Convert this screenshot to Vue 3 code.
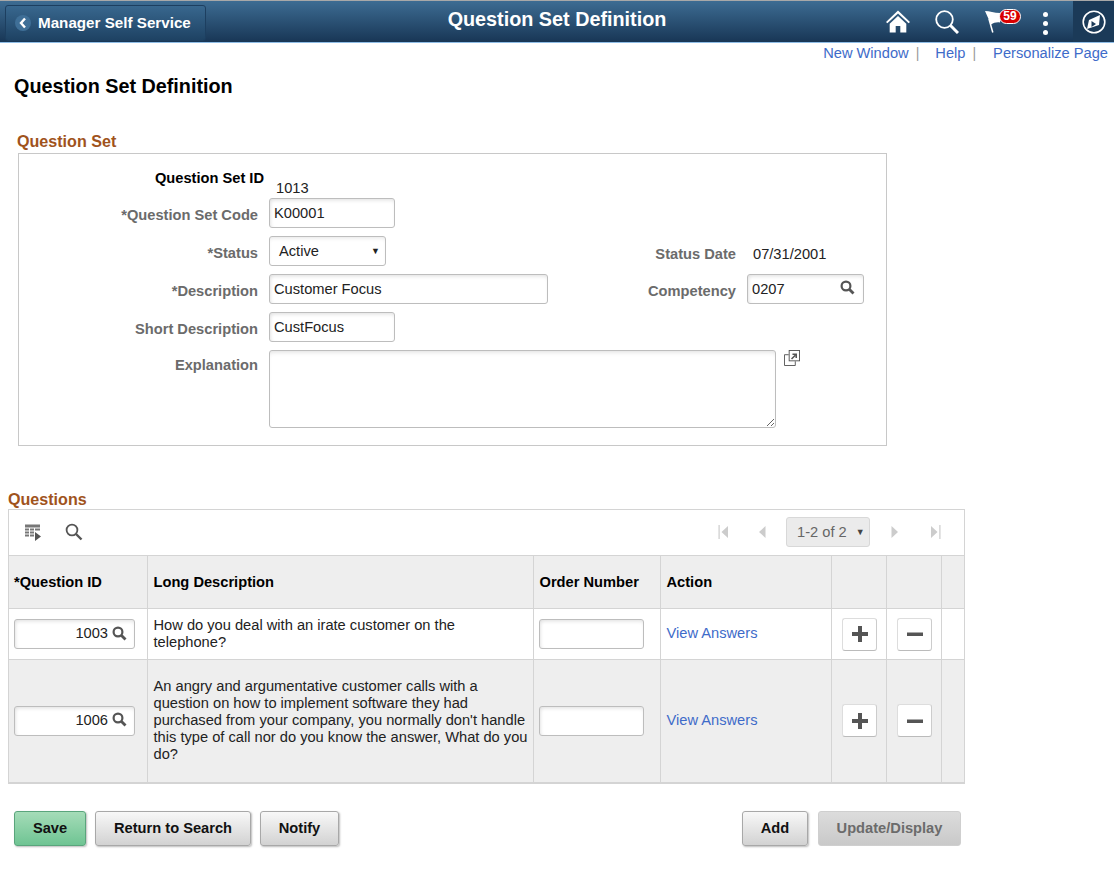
<template>
  <div class="page">
    <!-- 顶部横条 -->
    <header class="banner">
      <a href="javascript:;" class="back-btn">
        <span class="back-dot">
          <svg width="10" height="12" viewBox="0 0 10 12"><path d="M7 1.500 3 6l4 4.500" fill="none" stroke="#fff" stroke-width="2.400" /></svg>
        </span>
        <span class="back-text">Manager Self Service</span>
      </a>
      <div class="banner-title">Question Set Definition</div>
      <div class="banner-icons">
        <svg class="ic-home" width="24" height="23" viewBox="0 0 26 24">
          <path d="M13 0 0 12.500l1.500 1.500L13 3.200 24.500 14l1.500-1.500z" fill="#fff" />
          <path d="M4 14.500 13 6l9 8.500V24h-6.500v-7h-5v7H4z" fill="#fff" />
        </svg>
        <svg class="ic-search" width="24" height="24" viewBox="0 0 24 24">
          <circle cx="9.500" cy="9.500" r="8.300" fill="none" stroke="#fff" stroke-width="1.800" />
          <path d="M15.500 15.500 23 23" stroke="#fff" stroke-width="3" />
        </svg>
        <div class="flag">
          <svg width="18" height="22" viewBox="0 0 18 22">
            <path d="M0 0C5 0 10 2.500 17 2L15 11.500C11 11 9 12 6 13.500z" fill="#fff" />
            <path d="M4 8 7.800 21.500" stroke="#fff" stroke-width="1.500" />
          </svg>
          <span class="flag-count">59</span>
        </div>
        <div class="dots"><i></i><i></i><i></i></div>
        <div class="nav-bar-btn">
          <svg width="26" height="26" viewBox="0 0 26 26">
            <circle cx="13" cy="13" r="10.800" fill="none" stroke="#fff" stroke-width="1.600" />
            <path d="M19 6 18 16 6 20 8 11z" fill="#fff" />
            <path d="M10.500 12v6l4.500-3z" fill="#1b3a58" />
          </svg>
        </div>
      </div>
    </header>

    <nav class="page-links">
      <a href="javascript:;">New Window</a><span class="sep">|</span>
      <a href="javascript:;">Help</a><span class="sep">|</span>
      <a href="javascript:;" class="last">Personalize Page</a>
    </nav>

    <h1 class="page-title">Question Set Definition</h1>

    <!-- Question Set 表单 -->
    <h2 class="section-title set-title">Question Set</h2>
    <section class="set-box">
      <div class="id-row">
        <span class="id-label">Question Set ID</span>
        <span class="id-value">1013</span>
      </div>
      <div class="form-row">
        <label>*Question Set Code</label>
        <div class="input w-short">K00001</div>
      </div>
      <div class="form-row">
        <label>*Status</label>
        <div class="input select-box">Active<span class="caret">▼</span></div>
        <div class="side date-side">
          <label>Status Date</label>
          <span class="date">07/31/2001</span>
        </div>
      </div>
      <div class="form-row">
        <label>*Description</label>
        <div class="input w-long">Customer Focus</div>
        <div class="side">
          <label class="comp-label">Competency</label>
          <div class="input w-comp">
            0207
            <svg class="lens" width="15" height="15" viewBox="0 0 15 15"><circle cx="6" cy="6" r="4.400" fill="none" stroke="#555" stroke-width="2.200" /><path d="m9.500 9.500 4 4" stroke="#555" stroke-width="2.800" /></svg>
          </div>
        </div>
      </div>
      <div class="form-row">
        <label>Short Description</label>
        <div class="input w-short">CustFocus</div>
      </div>
      <div class="form-row area-row">
        <label>Explanation</label>
        <textarea class="area"></textarea>
        <svg class="expand" width="16" height="16" viewBox="0 0 17 17">
          <rect x="5.500" y="0.500" width="11" height="11" fill="#fff" stroke="#555" />
          <path d="M5 5H.5v11.500H12V12" fill="none" stroke="#555" />
          <path d="M8 9.500l4-4M9 4.500h4v4" fill="none" stroke="#555" stroke-width="1.600" />
        </svg>
      </div>
    </section>

    <!-- Questions 表格 -->
    <h2 class="section-title q-title">Questions</h2>
    <section class="grid-wrap">
      <div class="toolbar">
        <svg width="18" height="18" viewBox="0 0 18 18">
          <path d="M1 1.500h15v3H1zM1 5.500h4v2H1zM6 5.500h4v2H6zM11 5.500h5v2h-5zM1 8.500h4v2H1zM6 8.500h4v2H6zM1 11.500h4v2H1zM6 11.500h4v2H6z" fill="#777" />
          <path d="M11 9l6 4.500-6 4.500z" fill="#555" />
        </svg>
        <svg class="tool-search" width="18" height="18" viewBox="0 0 18 18"><circle cx="7" cy="7" r="5.400" fill="none" stroke="#555" stroke-width="1.800" /><path d="m11 11 5.500 5.500" stroke="#555" stroke-width="2.400" /></svg>
        <div class="pager">
          <svg width="11" height="14" viewBox="0 0 11 14"><path d="M.5 0h1.200v14H.5zM10 1v12L3.500 7z" fill="#ccc" /></svg>
          <svg class="pg-prev" width="8" height="14" viewBox="0 0 8 14"><path d="M7.500 1v12L1 7z" fill="#ccc" /></svg>
          <div class="pg-select">1-2 of 2<span class="caret small">▼</span></div>
          <svg class="pg-next" width="8" height="14" viewBox="0 0 8 14"><path d="M.5 1v12L7 7z" fill="#ccc" /></svg>
          <svg class="pg-last" width="11" height="14" viewBox="0 0 11 14"><path d="M1 1v12l6.500-6zM9.300 0h1.200v14H9.300z" fill="#ccc" /></svg>
        </div>
      </div>
      <table class="q-table">
        <colgroup>
          <col style="width: 138px" /><col style="width: 386px" /><col style="width: 127px" /><col style="width: 171px" />
          <col style="width: 55px" /><col style="width: 55px" /><col style="width: 23px" />
        </colgroup>
        <thead>
          <tr>
            <th>*Question ID</th><th class="txt">Long Description</th><th class="txt">Order Number</th><th class="txt">Action</th><th></th><th></th><th></th>
          </tr>
        </thead>
        <tbody>
          <tr v-for="(q, i) in questions" :key="q.id" :class="{ alt: i % 2 === 1 }">
            <td>
              <div class="input w-qid">
                {{ q.id }}
                <svg width="15" height="15" viewBox="0 0 15 15"><circle cx="6" cy="6" r="4.400" fill="none" stroke="#555" stroke-width="2.200" /><path d="m9.500 9.500 4 4" stroke="#555" stroke-width="2.800" /></svg>
              </div>
            </td>
            <td class="desc txt">{{ q.text }}</td>
            <td><div class="input w-order"></div></td>
            <td class="txt link-cell"><a href="javascript:;" class="link">View Answers</a></td>
            <td class="center">
              <button class="sq-btn"><svg width="16" height="16" viewBox="0 0 16 16"><path d="M6 0h4v6h6v4h-6v6H6v-6H0V6h6z" fill="#555" /></svg></button>
            </td>
            <td class="center">
              <button class="sq-btn"><svg width="16" height="16" viewBox="0 0 16 16"><path d="M0 6.500h16v3.500H0z" fill="#555" /></svg></button>
            </td>
            <td></td>
          </tr>
        </tbody>
      </table>
    </section>

    <!-- 底部按钮 -->
    <footer class="actions">
      <button class="btn save">Save</button>
      <button class="btn return">Return to Search</button>
      <button class="btn notify">Notify</button>
      <button class="btn add">Add</button>
      <button class="btn update">Update/Display</button>
    </footer>
  </div>
</template>

<script setup>
const questions = [
  { id: '1003', text: 'How do you deal with an irate customer on the telephone?' },
  {
    id: '1006',
    text: "An angry and argumentative customer calls with a question on how to implement software they had purchased from your company, you normally don't handle this type of call nor do you know the answer, What do you do?"
  }
];
</script>

<style>
html, body { background: #fff; }
</style>

<style scoped>
.page {
  width: 1114px;
  height: 879px;
  overflow: hidden;
  font-family: "Liberation Sans", Arial, sans-serif;
  font-size: 14.67px;
  color: #222;
  background: #fff;
}

.banner {
  height: 43px;
  box-sizing: border-box;
  display: flex;
  align-items: flex-start;
  position: relative;
  background: linear-gradient(to bottom, #3d6c93, #183655);
  border-top: 1px solid #a8a8a8;
  border-bottom: 1px solid #8fbde6;
}

.back-btn {
  margin: 4px 0 0 5px;
  width: 201px;
  height: 36px;
  box-sizing: border-box;
  display: flex;
  align-items: center;
  gap: 7px;
  padding-left: 9px;
  color: #fff;
  font-weight: bold;
  font-size: 15.2px;
  text-decoration: none;
  border: 1px solid #1d3f60;
  border-radius: 3px;
  background: linear-gradient(to bottom, #38678e, #1e4263);
}

.back-text { margin-top: -2px; }

.back-dot {
  width: 16px;
  height: 16px;
  border-radius: 50%;
  background: #3f6f97;
  display: flex;
  align-items: center;
  justify-content: center;
}

.banner-title {
  position: absolute;
  left: 0;
  width: 1114px;
  top: 7px;
  text-align: center;
  color: #fff;
  font-weight: bold;
  font-size: 19.8px;
  pointer-events: none;
}

.banner-icons {
  margin-left: auto;
  display: flex;
  align-items: flex-start;
  height: 41px;
}

.ic-home { margin-top: 9px; }
.ic-search { margin: 9px 0 0 25px; }

.flag {
  position: relative;
  margin: 8px 0 0 26px;
  width: 36px;
  height: 24px;
}

.flag svg {
  display: block;
  margin-top: 2px;
}

.flag-count {
  position: absolute;
  left: 14px;
  top: 0;
  width: 20px;
  height: 13px;
  line-height: 13px;
  text-align: center;
  background: #d90000;
  border: 1px solid #fff;
  border-radius: 8px;
  color: #fff;
  font-size: 12px;
  font-weight: bold;
}

.dots {
  margin: 11px 0 0 22px;
  width: 5px;
  display: flex;
  flex-direction: column;
  gap: 4px;
}

.dots i {
  width: 5px;
  height: 5px;
  border-radius: 50%;
  background: #fff;
}

.nav-bar-btn {
  margin-left: 25px;
  width: 41px;
  height: 41px;
  display: flex;
  align-items: center;
  justify-content: center;
  background: #1b3a58;
}

.page-links {
  height: 20px;
  display: flex;
  justify-content: flex-end;
  align-items: center;
  padding-right: 6px;
}

.page-links a {
  color: #3e6bc9;
  text-decoration: none;
}

.page-links .last { margin-left: 1px; }

.page-links .sep {
  margin: 0 16px 0 7px;
  color: #999;
  font-size: 14px;
}

.page-title {
  margin: 11px 0 0 14px;
  font-size: 19.8px;
  line-height: 24px;
  font-weight: bold;
  color: #000;
}

.section-title {
  margin: 0;
  font-size: 16.1px;
  line-height: 18px;
  font-weight: bold;
  color: #a0531c;
}

.set-title { margin: 34px 0 0 17px; }

.set-box {
  margin: 3px 0 0 18px;
  width: 869px;
  height: 293px;
  box-sizing: border-box;
  border: 1px solid #c8c8c8;
  padding-top: 14px;
  display: flex;
  flex-direction: column;
}

.id-row {
  height: 30px;
  display: flex;
  align-items: flex-start;
}

.id-label {
  width: 245px;
  text-align: right;
  font-weight: bold;
  color: #000;
  line-height: 20px;
}

.id-value {
  margin: 10px 0 0 12px;
  line-height: 20px;
}

.form-row {
  height: 38px;
  display: flex;
  align-items: flex-start;
  position: relative;
}

.form-row > label {
  width: 239px;
  flex: none;
  text-align: right;
  line-height: 34px;
  margin-right: 11px;
}

label {
  font-weight: bold;
  color: #6b6b6b;
  white-space: nowrap;
}

.input {
  height: 30px;
  box-sizing: border-box;
  border: 1px solid #bdbdbd;
  border-radius: 3px;
  background: #fff;
  box-shadow: inset 0 3px 4px -2px #ddd, inset 3px 0 4px -3px #ddd;
  padding-left: 4px;
  line-height: 26px;
  color: #222;
  display: flex;
  align-items: center;
  flex: none;
}

.w-short { width: 126px; }
.w-long { width: 279px; }

.select-box {
  width: 117px;
  padding-left: 9px;
  justify-content: space-between;
  padding-right: 5px;
  box-shadow: inset 0 3px 4px -2px #e4e4e4;
}

.caret {
  font-size: 9px;
  color: #222;
}

.caret.small {
  color: #444;
  margin-left: 9px;
}

.side {
  position: absolute;
  right: 22px;
  top: 0;
  height: 30px;
  display: flex;
  align-items: center;
}

.side label {
  line-height: 34px;
}

.date-side { height: 35px; }

.comp-label { align-self: flex-start; }

.date {
  width: 111px;
  margin-left: 17px;
  color: #222;
}

.w-comp {
  width: 117px;
  margin-left: 11px;
  justify-content: space-between;
  padding-right: 8px;
}

.lens { margin-bottom: 3px; }

.area-row { height: 78px; }

.area-row > label {
  line-height: 30px;
}

.area {
  width: 507px;
  height: 78px;
  box-sizing: border-box;
  border: 1px solid #bdbdbd;
  border-radius: 3px;
  margin: 0;
  padding: 4px;
  flex: none;
  box-shadow: inset 0 4px 5px -3px #ddd;
  outline: none;
}

.expand {
  margin: 0 0 0 8px;
}

.q-title { margin: 44px 0 0 8px; }

.grid-wrap {
  margin: 1px 0 0 8px;
  width: 957px;
  box-sizing: border-box;
  border-top: 1px solid #d4d4d4;
  border-left: 1px solid #d4d4d4;
  border-right: 1px solid #d4d4d4;
  border-bottom: 2px solid #d4d4d4;
}

.toolbar {
  height: 45px;
  display: flex;
  align-items: center;
  padding-left: 15px;
  padding-bottom: 1px;
  box-sizing: border-box;
}

.tool-search { margin-left: 23px; }

.pager {
  margin-left: auto;
  margin-right: 23px;
  display: flex;
  align-items: center;
}

.pg-prev { margin-left: 29px; }
.pg-next { margin-left: 21px; }
.pg-last { margin-left: 31px; }

.pg-select {
  margin-left: 20px;
  width: 84px;
  height: 30px;
  box-sizing: border-box;
  border: 1px solid #d8d8d8;
  border-radius: 3px;
  background: #ebebeb;
  color: #666;
  display: flex;
  align-items: center;
  padding-left: 10px;
}

.q-table {
  width: 955px;
  border-collapse: collapse;
  table-layout: fixed;
}

.q-table th,
.q-table td {
  border: 1px solid #d4d4d4;
  padding: 0 5px;
  text-align: left;
}

.q-table .txt { padding-left: 6px; padding-right: 4px; }

.q-table tr > :first-child { border-left: none; }
.q-table tr > :last-child { border-right: none; }
.q-table tbody tr:last-child td { border-bottom: none; }

.q-table th {
  height: 52px;
  background: #eee;
  color: #000;
  font-weight: bold;
}

.q-table td { color: #222; }
.q-table tbody tr { height: 51px; }
.q-table tbody tr.alt { height: 122px; background: #eee; }

.desc { line-height: 17px; }

.q-table .link-cell { padding-bottom: 2px; }

.w-qid {
  width: 121px;
  justify-content: flex-end;
  gap: 4px;
  padding-right: 7px;
  padding-bottom: 2px;
}

.w-order { width: 105px; }

.q-table .center {
  text-align: center;
  padding: 0 4px 0 6px;
}

.sq-btn {
  width: 35px;
  height: 33px;
  padding: 0;
  border: 1px solid #ddd;
  border-bottom-color: #bbb;
  border-right-color: #ccc;
  border-radius: 3px;
  background: #fff;
  display: inline-flex;
  align-items: center;
  justify-content: center;
  vertical-align: middle;
}

.link {
  color: #3e6bc9;
  text-decoration: none;
}

.actions {
  margin: 27px 0 0 14px;
  width: 947px;
  display: flex;
  align-items: flex-start;
}

.btn {
  height: 35px;
  box-sizing: border-box;
  border: 1px solid #a8a8a8;
  border-radius: 3px;
  background: linear-gradient(to bottom, #f8f8f8, #d2d2d2);
  box-shadow: 1px 1px 2px #bbb;
  font-family: inherit;
  font-size: 14.67px;
  font-weight: bold;
  color: #111;
  padding: 0;
  flex: none;
}

.save {
  width: 72px;
  background: linear-gradient(to bottom, #a5dcb8, #6fc493);
  border-color: #5aa57c;
}

.return { width: 156px; margin-left: 9px; }
.notify { width: 79px; margin-left: 9px; }
.add { width: 66px; margin-left: auto; }

.update {
  width: 143px;
  margin-left: 10px;
  background: linear-gradient(to bottom, #dcdcdc, #c9c9c9);
  border-color: #cfcfcf;
  box-shadow: none;
  color: #6b6b6b;
}
</style>
